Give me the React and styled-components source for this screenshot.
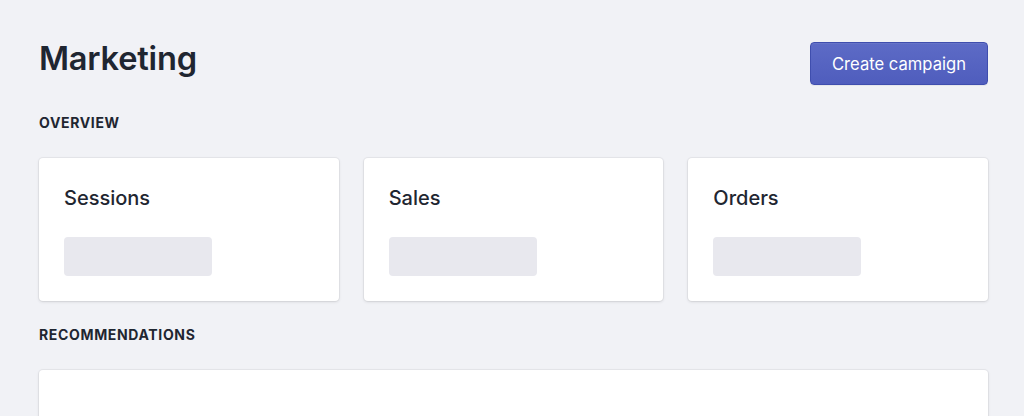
import styled, { createGlobalStyle } from 'styled-components';

const GlobalStyle = createGlobalStyle`
  * {
    box-sizing: border-box;
  }

  body {
    margin: 0;
    padding: 0;
    background: #f1f2f6;
    font-family: Inter, "Noto Sans", sans-serif;
    color: #1f2631;
    -webkit-font-smoothing: antialiased;
  }
`;

const Page = styled.div`
  height: 100vh;
  padding: 38px 36px 0 39px;
  overflow: hidden;
`;

const Header = styled.header`
  display: flex;
  justify-content: space-between;
  align-items: flex-start;
  margin-bottom: 28px;
`;

const Title = styled.h1`
  margin: 0;
  font-size: 32.6px;
  line-height: 40px;
  font-weight: 600;
  letter-spacing: -0.2px;
`;

const PrimaryButton = styled.button`
  margin-top: 4px;
  height: 43px;
  padding: 0 21px;
  border: 1px solid #3f4eae;
  border-radius: 4px;
  background: linear-gradient(180deg, #5d6bc6, #4f5dbd);
  box-shadow: inset 0 1px 0 0 #6774c8, 0 1px 0 0 rgba(22, 29, 37, 0.05);
  color: #fff;
  font-family: Inter, "Noto Sans", sans-serif;
  font-size: 16.6px;
  font-weight: 400;
  cursor: pointer;
`;

const Section = styled.section`
  margin-bottom: 24px;
`;

const SectionHeading = styled.h2`
  margin: 0 0 25px;
  font-size: 14px;
  line-height: 20px;
  font-weight: 700;
  letter-spacing: 0.65px;
  text-transform: uppercase;
`;

const CardGrid = styled.div`
  display: grid;
  grid-template-columns: repeat(3, 1fr);
  gap: 25px;
`;

const Card = styled.div`
  background: #fff;
  border-radius: 4px;
  box-shadow: 0 0 0 1px rgba(63, 63, 68, 0.05), 0 1px 3px 0 rgba(63, 63, 68, 0.15);
  padding: 26px 25px 25px;
  min-height: ${(p) => p.$minHeight || 0}px;
`;

const CardTitle = styled.h3`
  margin: 0;
  font-size: 20px;
  line-height: 28px;
  font-weight: 500;
`;

const Skeleton = styled.div`
  margin-top: 25px;
  width: 148px;
  height: 39px;
  border-radius: 4px;
  background: #e8e8ee;
`;

const metrics = ['Sessions', 'Sales', 'Orders'];

export default function App() {
  return (
    <>
      <GlobalStyle />
      <Page>
        <Header>
          <Title>Marketing</Title>
          <PrimaryButton>Create campaign</PrimaryButton>
        </Header>

        <Section>
          <SectionHeading>Overview</SectionHeading>
          <CardGrid>
            {metrics.map((m) => (
              <Card key={m}>
                <CardTitle>{m}</CardTitle>
                <Skeleton />
              </Card>
            ))}
          </CardGrid>
        </Section>

        <Section>
          <SectionHeading>Recommendations</SectionHeading>
          <Card $minHeight={200} />
        </Section>
      </Page>
    </>
  );
}
